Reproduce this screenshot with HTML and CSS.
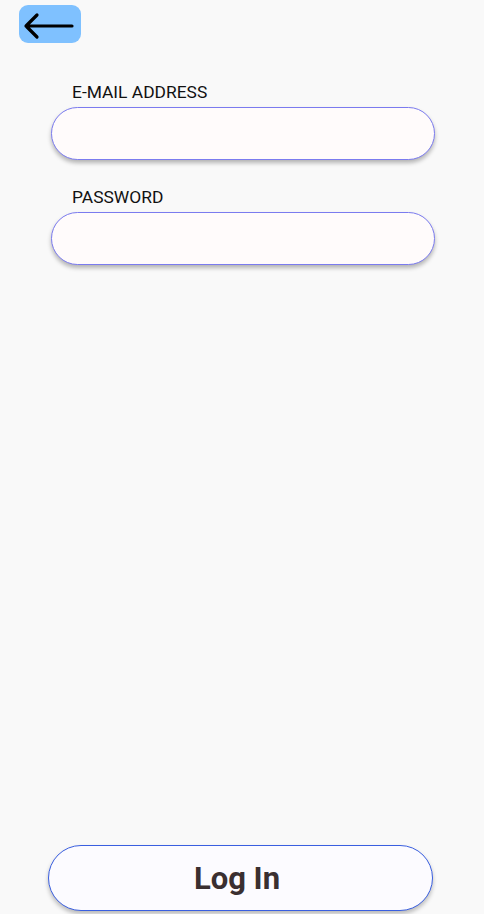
FILE: index.html
```html
<!DOCTYPE html>
<html>
<head>
<meta charset="utf-8">
<link rel="stylesheet" href="styles.css">
</head>
<body>
<div class="screen">
  <header class="top">
    <button class="back" aria-label="Back">
      <svg width="56" height="32" viewBox="0 0 56 32"><path d="M53 18H7M18 7L7 18L18 29" fill="none" stroke="#000" stroke-width="3.2" stroke-linecap="round" stroke-linejoin="round"/></svg>
    </button>
  </header>
  <form class="form">
    <div class="field">
      <label class="label">E-MAIL ADDRESS</label>
      <div class="input"></div>
    </div>
    <div class="field">
      <label class="label">PASSWORD</label>
      <div class="input"></div>
    </div>
  </form>
  <div class="spacer"></div>
  <div class="footer">
    <button class="login">Log In</button>
  </div>
</div>
</body>
</html>
```
FILE: styles.css
```css
html, body {
  margin: 0;
  padding: 0;
  background: #f9f9f9;
  font-family: Roboto, "Liberation Sans", sans-serif;
}
.screen {
  width: 484px;
  height: 914px;
  display: flex;
  flex-direction: column;
}
.top {
  padding: 5px 0 0 19px;
  height: 38px;
}
.back {
  width: 62px;
  height: 38px;
  border: none;
  border-radius: 9px;
  background: #7fc1ff;
  padding: 0;
  display: flex;
  align-items: center;
  justify-content: flex-start;
}
.back svg { display: block; }
.form {
  display: flex;
  flex-direction: column;
  gap: 27px;
  padding: 39px 0 0 51px;
}
.field {
  display: flex;
  flex-direction: column;
}
.label {
  font-size: 17.4px;
  color: #111;
  padding-left: 21px;
  line-height: 20px;
  height: 20px;
  margin-bottom: 5px;
}
.input {
  width: 382px;
  height: 51px;
  border: 1.5px solid #7b7bef;
  border-radius: 28px;
  background: #fffbfb;
  box-shadow: 0 3px 4px rgba(0,0,0,0.28);
}
.spacer { flex: 1; }
.footer {
  padding: 0 0 3px 48px;
}
.login {
  width: 385px;
  height: 66px;
  border: 1.5px solid #3a5fe0;
  border-radius: 34px;
  background: #fcfbff;
  box-shadow: 0 3px 4px rgba(0,0,0,0.25);
  font-family: Roboto, "Liberation Sans", sans-serif;
  font-weight: 700;
  font-size: 31px;
  color: #3a2f30;
  padding: 0 7px 0 0;
}
```
